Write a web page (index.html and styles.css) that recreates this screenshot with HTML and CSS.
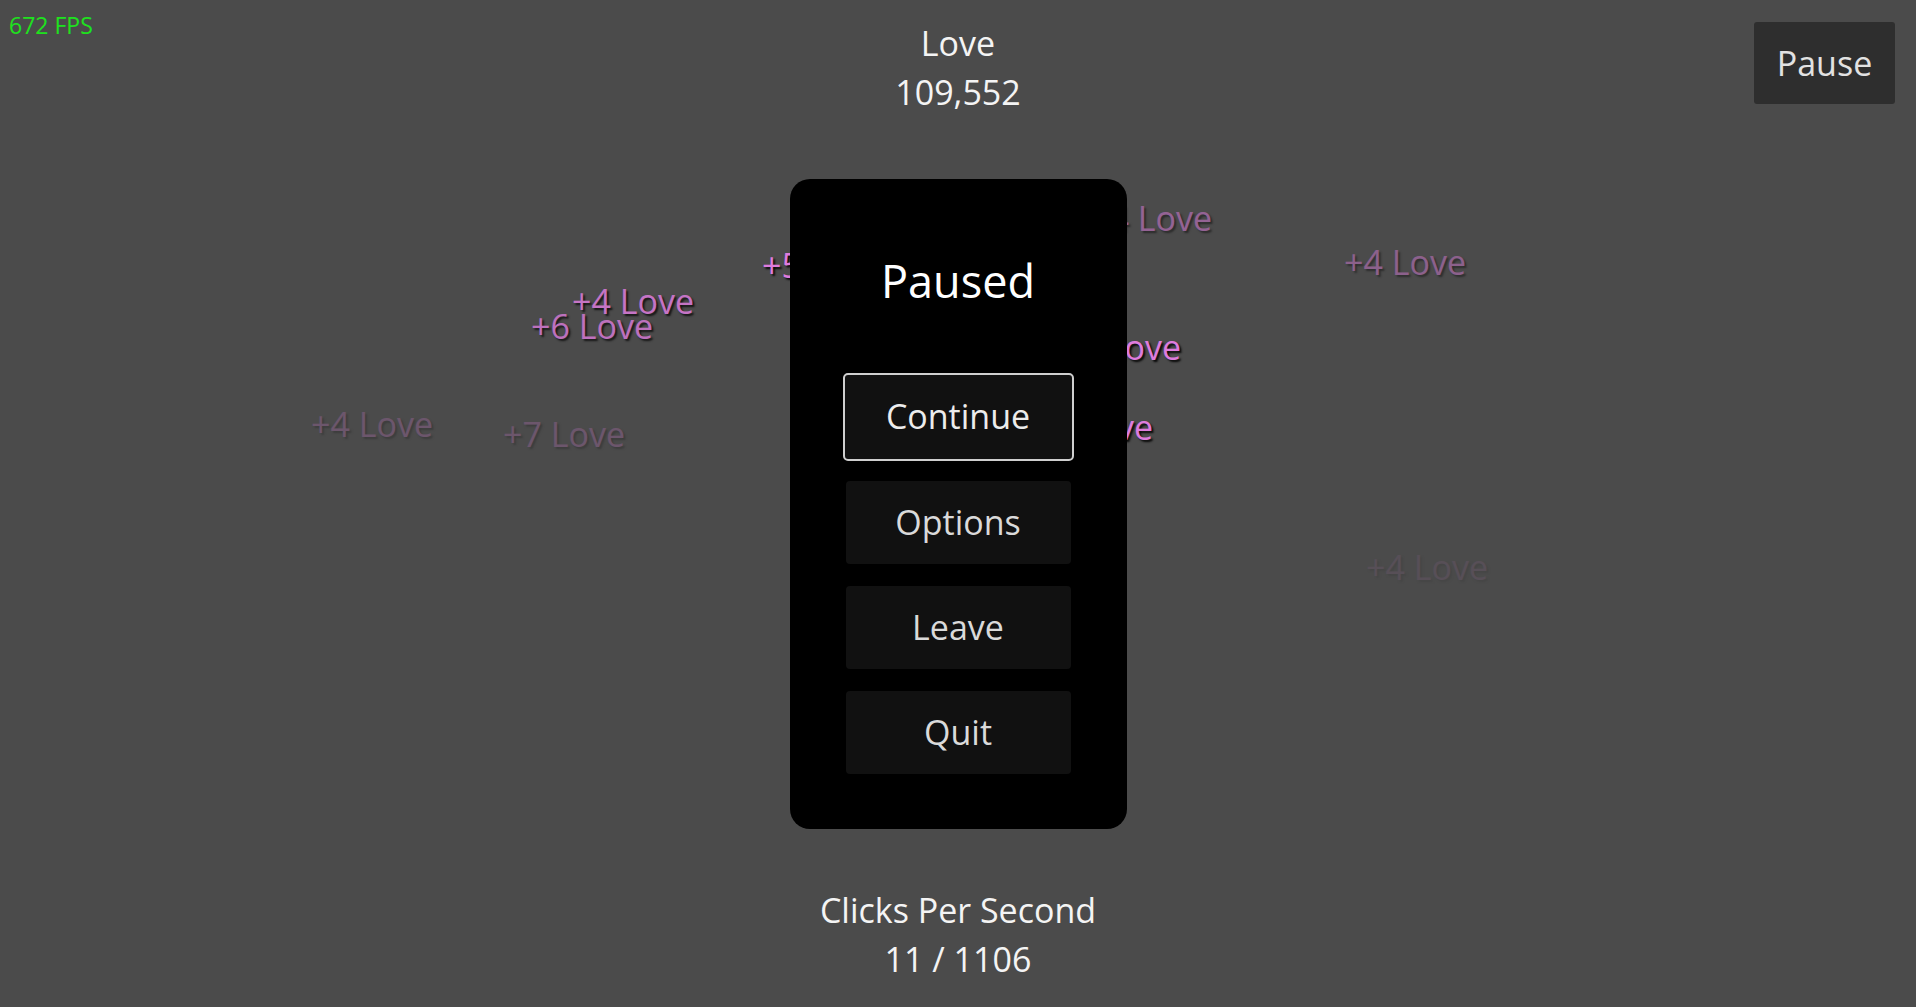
FILE: index.html
```html
<!DOCTYPE html>
<html lang="en">
<head>
<meta charset="utf-8">
<title>Love Clicker</title>
<link rel="stylesheet" href="styles.css">
</head>
<body>
<div class="floaters">
  <span class="floater" style="left:572px;top:279px;opacity:0.75">+4 Love</span>
  <span class="floater" style="left:531px;top:304px;opacity:0.7">+6 Love</span>
  <span class="floater" style="left:762px;top:243px;opacity:0.9">+5 Love</span>
  <span class="floater" style="left:1090px;top:196px;opacity:0.45">+4 Love</span>
  <span class="floater" style="left:1344px;top:240px;opacity:0.4">+4 Love</span>
  <span class="floater" style="left:1059px;top:325px;opacity:0.9">+6 Love</span>
  <span class="floater" style="left:1031px;top:405px;opacity:0.9">+5 Love</span>
  <span class="floater" style="left:311px;top:402px;opacity:0.2">+4 Love</span>
  <span class="floater" style="left:503px;top:412px;opacity:0.2">+7 Love</span>
  <span class="floater" style="left:1366px;top:545px;opacity:0.07">+4 Love</span>
</div>

<header class="topbar">
  <div class="fps">672 FPS</div>
  <div class="score">
    <div class="stat-label">Love</div>
    <div class="stat-value">109,552</div>
  </div>
  <div class="topbar-right">
    <button class="pause-btn">Pause</button>
  </div>
</header>

<main class="playfield"></main>

<footer class="footer">
  <div class="stat-label">Clicks Per Second</div>
  <div class="stat-value">11 / 1106</div>
</footer>

<div class="modal-layer">
  <div class="pause-panel">
    <h1 class="pause-title">Paused</h1>
    <div class="menu">
      <button class="menu-btn menu-btn-focused">Continue</button>
      <button class="menu-btn">Options</button>
      <button class="menu-btn">Leave</button>
      <button class="menu-btn">Quit</button>
    </div>
  </div>
</div>
</body>
</html>
```

FILE: styles.css
```css
html, body {
  margin: 0;
  padding: 0;
}

body {
  height: 100vh;
  overflow: hidden;
  background: #4b4b4b;
  color: #f2f2f2;
  font-family: "Open Sans", "Noto Sans", sans-serif;
  display: flex;
  flex-direction: column;
  position: relative;
}

.floaters {
  position: absolute;
  inset: 0;
  pointer-events: none;
}

.floater {
  position: absolute;
  font-size: 34px;
  line-height: 45px;
  white-space: nowrap;
  color: #ee82ee;
  text-shadow: 2px 2px 2px #000;
}

.topbar {
  position: relative;
  display: grid;
  grid-template-columns: 1fr auto 1fr;
  align-items: start;
}

.fps {
  padding: 10px 0 0 9px;
  font-size: 23px;
  line-height: 31px;
  font-weight: 500;
  color: #1ee21e;
}

.score {
  padding-top: 19px;
  text-align: center;
}

.stat-label,
.stat-value {
  font-size: 34px;
  line-height: 49px;
  text-align: center;
  color: #f4f4f4;
}

.topbar-right {
  display: flex;
  justify-content: flex-end;
  padding: 22px 21px 0 0;
}

.pause-btn {
  width: 141px;
  height: 82px;
  border: none;
  border-radius: 3px;
  background: #2e2e2e;
  color: #e2e2e2;
  font-family: inherit;
  font-size: 34px;
  line-height: 45px;
  padding: 0;
}

.playfield {
  flex: 1;
}

.footer {
  position: relative;
  padding-bottom: 23px;
}

.modal-layer {
  position: fixed;
  inset: 0;
  display: flex;
  align-items: center;
  justify-content: center;
}

.pause-panel {
  width: 337px;
  height: 650px;
  box-sizing: border-box;
  background: #000;
  border-radius: 20px;
  display: flex;
  flex-direction: column;
  align-items: center;
  padding-top: 71px;
}

.pause-title {
  margin: 0 0 65px;
  font-size: 45px;
  line-height: 61px;
  font-weight: 400;
  color: #fff;
}

.menu {
  display: flex;
  flex-direction: column;
  align-items: center;
  gap: 22px;
}

.menu-btn {
  width: 225px;
  height: 83px;
  box-sizing: border-box;
  border: none;
  border-radius: 4px;
  background: #111;
  color: #dadada;
  font-family: inherit;
  font-size: 34px;
  line-height: 45px;
  padding: 0;
}

.menu-btn-focused {
  width: 231px;
  height: 88px;
  margin: -3px 0 -2px;
  border: 2px solid #cfcfcf;
  border-radius: 5px;
  color: #ececec;
}
```
